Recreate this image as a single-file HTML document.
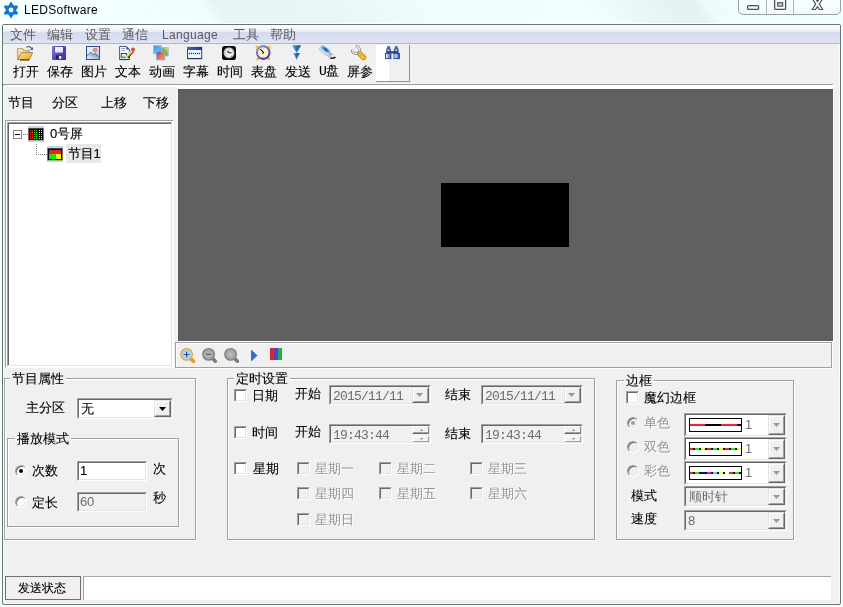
<!DOCTYPE html>
<html lang="zh-CN">
<head>
<meta charset="utf-8">
<title>LEDSoftware</title>
<style>
*{box-sizing:border-box;margin:0;padding:0}
html,body{width:843px;height:607px;overflow:hidden}
body{position:relative;background:#f0fefe;font-family:"Liberation Sans","WenQuanYi Zen Hei","Noto Sans CJK SC",sans-serif;font-size:13px;line-height:13px;color:#000}
.a{position:absolute}
svg{position:absolute;overflow:visible}
.t{position:absolute;white-space:nowrap;height:13px;line-height:13px;-webkit-text-stroke:0.12px #000}
.t.mi,.t.g,.t.d,.t.nb{-webkit-text-stroke:0}
.m{font-family:"Liberation Mono","WenQuanYi Zen Hei",monospace;letter-spacing:-0.8px}
.n{letter-spacing:-0.23px}
body>div.t,body>div.gt{will-change:transform}
.g{color:#6d6d6d}
.d{color:#939393;text-shadow:1px 1px 0 #fff}
#glass{left:0;top:0;width:843px;height:607px;background:#f0fefe}
#cap{left:0;top:0;width:843px;height:24px;background:linear-gradient(52deg,#f8ffff 0,#f4ffff 60px,#f1fefe 168px,#e5f5f4 183px,#e8f7f6 267px,#f0fdfd 354px,#f2ffff 470px,#e9f8f7 510px,#e3f3f1 545px,#e4f4f2 559px,#effcfc 570px,#f1fefe 679px)}
#frame{left:1px;top:23px;width:841px;height:583px;border:1px solid #fbffff;border-radius:3px}
#win{left:2px;top:24px;width:839px;height:581px;border:1px solid #6b7272;border-radius:2px;background:#f0f0f0;box-shadow:inset 1px 1px 0 #fcfcfc,inset -1px -1px 0 #fcfcfc}
#menu{left:3px;top:25px;width:837px;height:19px;background:linear-gradient(#ffffff 0,#fbfbfe 2px,#eef0fa 5px,#e7eaf7 7px,#d5dbee 7px,#d8ddf0 12px,#dfe4f4 18px);border-bottom:1px solid #b0b6d0}
.mi{color:#5a5a5a}
.grp{position:absolute;border:1px solid #a0a0a0;box-shadow:1px 1px 0 #fff,inset 1px 1px 0 #fff}
.gt{position:absolute;background:#f0f0f0;white-space:nowrap;height:13px;line-height:13px;padding:0 2px;-webkit-text-stroke:0.12px #000}
.sunk{position:absolute;border-style:solid;border-width:1px;border-color:#a0a0a0 #fff #fff #a0a0a0;background:#fff}
.sunk:before{content:"";position:absolute;left:0;top:0;right:0;bottom:0;border-style:solid;border-width:1px;border-color:#696969 #e3e3e3 #e3e3e3 #696969}
.sunk.dis{background:#f0f0f0}
.btn{position:absolute;background:#f0f0f0;border-style:solid;border-width:1px;border-color:#e3e3e3 #696969 #696969 #e3e3e3}
.btn:before{content:"";position:absolute;left:0;top:0;right:0;bottom:0;border-style:solid;border-width:1px;border-color:#fff #a0a0a0 #a0a0a0 #fff}
.arr{position:absolute;width:7px;height:4px;background:#000;clip-path:polygon(0 0,100% 0,50% 100%)}
.arr.ga{background:#9a9a9a}
.cb{position:absolute;width:13px;height:13px;border-style:solid;border-width:1px;border-color:#a0a0a0 #fff #fff #a0a0a0;background:#fff}
.cb:before{content:"";position:absolute;left:0;top:0;right:0;bottom:0;border-style:solid;border-width:1px;border-color:#696969 #e3e3e3 #e3e3e3 #696969}
.cb.dis{background:#f0f0f0}
.rb{position:absolute;width:12px;height:12px;border-radius:50%;background:#fff;border:1px solid;border-color:#a0a0a0 #fff #fff #a0a0a0;box-shadow:inset 1px 1px 0 #696969,inset -1px -1px 0 #e3e3e3}
.rb.dis{background:#f0f0f0}
.rb i{position:absolute;left:3px;top:3px;width:4px;height:4px;border-radius:50%;background:#000}
.rb.dis i{background:#a0a0a0}
</style>
</head>
<body>
<div id="glass" class="a"></div>
<div id="cap" class="a"></div>
<div id="frame" class="a"></div>
<div id="win" class="a"></div>

<!-- title bar -->
<svg style="left:4px;top:2px" width="14" height="16" viewBox="0 0 14 16"><path d="M7 1.2 L12.9 11.4 L1.1 11.4 Z M1.1 4.6 L12.9 4.6 L7 14.8 Z" fill="#0b76da" stroke="#0b76da" stroke-width="2.1" stroke-linejoin="round"/><circle cx="7" cy="8" r="2.4" fill="#fff"/></svg>
<div class="t nb" style="left:24px;top:3px;font-size:12px;height:14px;line-height:14px;letter-spacing:0.3px">LEDSoftware</div>
<div class="a" style="left:738px;top:-1px;width:103px;height:16px;border:1px solid #9aa3a3;border-radius:0 0 5px 5px;background:linear-gradient(#f8fefe,#f0f9f9)"></div>
<div class="a" style="left:766px;top:0;width:1px;height:14px;background:#b0b8b8"></div>
<div class="a" style="left:793px;top:0;width:1px;height:14px;background:#b0b8b8"></div>
<svg style="left:738px;top:0" width="103" height="15" viewBox="0 0 103 15">
<rect x="9.6" y="5.6" width="11" height="3.8" rx="1" fill="#f6f6f6" stroke="#4e5066" stroke-width="1.3"/>
<rect x="36.6" y="-1.4" width="11" height="10.8" rx="1" fill="#fbfbfb" stroke="#4e5066" stroke-width="1.3"/>
<rect x="39.8" y="2.7" width="4.8" height="3.4" fill="#d8d8d8" stroke="#4e5066" stroke-width="1.2"/>
<path d="M74.2 -1.5 L77.6 -1.5 L79.5 1.6 L81.4 -1.5 L84.8 -1.5 L81.3 4.2 L84.8 9.5 L81.4 9.5 L79.5 6.6 L77.6 9.5 L74.2 9.5 L77.7 4.2 Z" fill="#fcfcfc" stroke="#4e5066" stroke-width="1.2" stroke-linejoin="round"/>
</svg>

<!-- menu -->
<div id="menu" class="a"></div>
<div class="t mi" style="left:10px;top:28px">文件</div>
<div class="t mi" style="left:47px;top:28px">编辑</div>
<div class="t mi" style="left:85px;top:28px">设置</div>
<div class="t mi" style="left:122px;top:28px">通信</div>
<div class="t mi" style="left:233px;top:28px">工具</div>
<div class="t mi" style="left:270px;top:28px">帮助</div>
<div class="t mi" style="left:162px;top:28px;font-size:12px;letter-spacing:0.33px;height:14px;line-height:14px">Language</div>
<!-- toolbar -->
<div class="t" style="left:13px;top:65px">打开</div>
<div class="t" style="left:47px;top:65px">保存</div>
<div class="t" style="left:81px;top:65px">图片</div>
<div class="t" style="left:115px;top:65px">文本</div>
<div class="t" style="left:149px;top:65px">动画</div>
<div class="t" style="left:183px;top:65px">字幕</div>
<div class="t" style="left:217px;top:65px">时间</div>
<div class="t" style="left:251px;top:65px">表盘</div>
<div class="t" style="left:285px;top:65px">发送</div>
<div class="t" style="left:347px;top:65px">屏参</div>
<div class="t m" style="left:319px;top:65px">U盘</div>
<div class="a" style="left:376px;top:45px;width:34px;height:37px;background:linear-gradient(90deg,#fff 0,#fff 13px,#f0f0f0 13px);border-right:1px solid #909090;border-bottom:1px solid #909090"></div>
<div class="a" style="left:3px;top:84px;width:830px;height:1px;background:#a0a0a0"></div>
<div class="a" style="left:4px;top:85px;width:830px;height:2px;background:#fff"></div>
<div class="a" style="left:177px;top:87px;width:657px;height:1px;background:#fff"></div>
<div class="a" style="left:3px;top:85px;width:1px;height:1px;background:#a0a0a0"></div>
<!-- left pane -->
<div class="t" style="left:8px;top:96px">节目</div>
<div class="t" style="left:52px;top:96px">分区</div>
<div class="t" style="left:101px;top:96px">上移</div>
<div class="t" style="left:143px;top:96px">下移</div>
<div class="a" style="left:5px;top:120px;width:169px;height:248px;border-style:solid;border-width:1px;border-color:#a0a0a0 #fff #fff #a0a0a0"></div>
<div class="a" style="left:6px;top:121px;width:167px;height:246px;border-style:solid;border-width:1px;border-color:#fff #fff #fff #fff"></div>
<div class="a" style="left:7px;top:122px;width:165px;height:244px;border-style:solid;border-width:1px;border-color:#a0a0a0 #e3e3e3 #e3e3e3 #a0a0a0;background:#fff"></div>
<div class="a" style="left:8px;top:123px;width:163px;height:242px;border-style:solid;border-width:1px 0 0 1px;border-color:#696969"></div>
<div class="a" style="left:13px;top:130px;width:9px;height:9px;border:1px solid #848484;background:#fff"></div>
<div class="a" style="left:15px;top:134px;width:5px;height:1px;background:#000"></div>
<div class="a" style="left:23px;top:134px;width:5px;height:1px;background:repeating-linear-gradient(90deg,#808080 0,#808080 1px,transparent 1px,transparent 2px)"></div>
<div class="a" style="left:36px;top:144px;width:1px;height:11px;background:repeating-linear-gradient(180deg,#808080 0,#808080 1px,transparent 1px,transparent 2px)"></div>
<div class="a" style="left:36px;top:154px;width:11px;height:1px;background:repeating-linear-gradient(90deg,#808080 0,#808080 1px,transparent 1px,transparent 2px)"></div>
<div class="t n" style="left:50px;top:127px">0号屏</div>
<div class="a" style="left:66px;top:144px;width:35px;height:19px;background:#e8e8e8"></div>
<div class="t n" style="left:68px;top:147px">节目1</div>

<!-- canvas -->
<div class="a" style="left:177px;top:88px;width:657px;height:254px;border:1px solid #fff;background:#606060;box-shadow:inset 1px 1px 0 #565656"></div>
<div class="a" style="left:441px;top:183px;width:128px;height:64px;background:#000"></div>
<div class="grp" style="left:175px;top:342px;width:657px;height:26px"></div>
<div class="a" style="left:270px;top:348px;width:4px;height:12px;background:#e8202c"></div>
<div class="a" style="left:274px;top:348px;width:4px;height:12px;background:#3c4cc8"></div>
<div class="a" style="left:278px;top:348px;width:4px;height:12px;background:#28a850"></div>
<svg style="left:250px;top:349px" width="9" height="13" viewBox="0 0 9 13"><path d="M1 0.5 L7.5 6.5 L1 12.5 Z" fill="#2f6fe0"/></svg>

<!-- group 1 -->
<div class="grp" style="left:4px;top:378px;width:192px;height:162px"></div>
<div class="gt" style="left:10px;top:372px">节目属性</div>
<div class="t" style="left:26px;top:401px">主分区</div>
<div class="sunk" style="left:77px;top:398px;width:96px;height:21px"></div>
<div class="t" style="left:81px;top:402px">无</div>
<div class="btn" style="left:154px;top:400px;width:17px;height:17px"></div>
<div class="arr" style="left:159px;top:407px"></div>
<div class="grp" style="left:7px;top:438px;width:172px;height:89px"></div>
<div class="gt" style="left:15px;top:432px">播放模式</div>
<div class="rb" style="left:15px;top:465px"><i></i></div>
<div class="t" style="left:32px;top:464px">次数</div>
<div class="sunk" style="left:77px;top:461px;width:70px;height:20px"></div>
<div class="t n" style="left:80px;top:464px">1</div>
<div class="t" style="left:153px;top:462px">次</div>
<div class="rb" style="left:15px;top:496px"></div>
<div class="t" style="left:32px;top:496px">定长</div>
<div class="sunk dis" style="left:77px;top:492px;width:70px;height:20px"></div>
<div class="t n g" style="left:80px;top:495px">60</div>
<div class="t" style="left:153px;top:491px">秒</div>

<!-- group 2 -->
<div class="grp" style="left:227px;top:378px;width:368px;height:162px"></div>
<div class="gt" style="left:234px;top:372px">定时设置</div>
<div class="cb" style="left:234px;top:389px"></div>
<div class="t" style="left:252px;top:389px">日期</div>
<div class="t" style="left:295px;top:387px">开始</div>
<div class="sunk dis" style="left:329px;top:385px;width:102px;height:20px"></div>
<div class="t m g" style="left:333px;top:390px">2015/11/11</div>
<div class="btn" style="left:412px;top:387px;width:17px;height:16px"></div>
<div class="arr ga" style="left:416px;top:393px"></div>
<div class="t" style="left:445px;top:388px">结束</div>
<div class="sunk dis" style="left:481px;top:385px;width:102px;height:20px"></div>
<div class="t m g" style="left:485px;top:390px">2015/11/11</div>
<div class="btn" style="left:564px;top:387px;width:17px;height:16px"></div>
<div class="arr ga" style="left:568px;top:393px"></div>
<div class="cb" style="left:234px;top:426px"></div>
<div class="t" style="left:252px;top:426px">时间</div>
<div class="t" style="left:295px;top:425px">开始</div>
<div class="sunk dis" style="left:329px;top:424px;width:102px;height:20px"></div>
<div class="t m g" style="left:333px;top:429px">19:43:44</div>
<div class="a" style="left:412px;top:426px;width:17px;height:8px;border-style:solid;border-width:1px;border-color:#fff #8a8a8a #696969 #fff;box-shadow:inset 0 -1px 0 #a0a0a0"></div>
<div class="a" style="left:413px;top:436px;width:16px;height:6px;border-style:solid;border-width:1px;border-color:#fff #a0a0a0 #a0a0a0 #fff"></div>
<div class="a" style="left:421px;top:429px;width:1px;height:1px;background:#a0a0a0"></div><div class="a" style="left:420px;top:430px;width:3px;height:1px;background:#a0a0a0"></div>
<div class="a" style="left:420px;top:438px;width:3px;height:1px;background:#a0a0a0"></div><div class="a" style="left:421px;top:439px;width:1px;height:1px;background:#a0a0a0"></div>
<div class="t" style="left:445px;top:427px">结束</div>
<div class="sunk dis" style="left:481px;top:424px;width:102px;height:20px"></div>
<div class="t m g" style="left:485px;top:429px">19:43:44</div>
<div class="a" style="left:564px;top:426px;width:17px;height:8px;border-style:solid;border-width:1px;border-color:#fff #8a8a8a #696969 #fff;box-shadow:inset 0 -1px 0 #a0a0a0"></div>
<div class="a" style="left:565px;top:436px;width:16px;height:6px;border-style:solid;border-width:1px;border-color:#fff #a0a0a0 #a0a0a0 #fff"></div>
<div class="a" style="left:573px;top:429px;width:1px;height:1px;background:#a0a0a0"></div><div class="a" style="left:572px;top:430px;width:3px;height:1px;background:#a0a0a0"></div>
<div class="a" style="left:572px;top:438px;width:3px;height:1px;background:#a0a0a0"></div><div class="a" style="left:573px;top:439px;width:1px;height:1px;background:#a0a0a0"></div>
<div class="cb" style="left:234px;top:462px"></div>
<div class="t" style="left:253px;top:462px">星期</div>
<div class="cb dis" style="left:297px;top:462px"></div><div class="t d" style="left:315px;top:462px">星期一</div>
<div class="cb dis" style="left:379px;top:462px"></div><div class="t d" style="left:397px;top:462px">星期二</div>
<div class="cb dis" style="left:470px;top:462px"></div><div class="t d" style="left:488px;top:462px">星期三</div>
<div class="cb dis" style="left:297px;top:487px"></div><div class="t d" style="left:315px;top:487px">星期四</div>
<div class="cb dis" style="left:379px;top:487px"></div><div class="t d" style="left:397px;top:487px">星期五</div>
<div class="cb dis" style="left:470px;top:487px"></div><div class="t d" style="left:488px;top:487px">星期六</div>
<div class="cb dis" style="left:297px;top:513px"></div><div class="t d" style="left:315px;top:513px">星期日</div>
<!-- group 3 -->
<div class="grp" style="left:616px;top:380px;width:178px;height:160px"></div>
<div class="gt" style="left:624px;top:374px">边框</div>
<div class="cb" style="left:626px;top:391px"></div>
<div class="t" style="left:644px;top:391px">魔幻边框</div>
<div class="rb dis" style="left:627px;top:417px"><i></i></div>
<div class="t d" style="left:644px;top:416px">单色</div>
<div class="sunk" style="left:684px;top:413px;width:103px;height:24px"></div>
<div class="a" style="left:689px;top:418px;width:53px;height:14px;border:1px solid #000;background:#fff"></div>
<div class="a" style="left:690px;top:424px;width:51px;height:2px;background:linear-gradient(90deg,#ff2020 0px,#ff2020 15px,#000 15px,#000 31px,#ff2020 31px,#ff2020 47px,#000 47px,#000 51px)"></div>
<div class="t n g" style="left:745px;top:418px">1</div>
<div class="btn" style="left:768px;top:415px;width:17px;height:20px"></div>
<div class="arr ga" style="left:773px;top:423px"></div>
<div class="rb dis" style="left:627px;top:441px"></div>
<div class="t d" style="left:644px;top:440px">双色</div>
<div class="sunk" style="left:684px;top:437px;width:103px;height:24px"></div>
<div class="a" style="left:689px;top:442px;width:53px;height:14px;border:1px solid #000;background:#fff"></div>
<div class="a" style="left:690px;top:448px;width:51px;height:2px;background:linear-gradient(90deg,#ff2020 0px,#ff2020 3px,#000 3px,#000 5px,#00ff00 5px,#00ff00 9px,#000 9px,#000 11px,#ffff00 11px,#ffff00 15px,#000 15px,#000 17px,#ff2020 17px,#ff2020 21px,#000 21px,#000 23px,#00ff00 23px,#00ff00 27px,#000 27px,#000 29px,#ffff00 29px,#ffff00 33px,#000 33px,#000 35px,#ff2020 35px,#ff2020 39px,#000 39px,#000 41px,#00ff00 41px,#00ff00 45px,#000 45px,#000 47px,#ffff00 47px,#ffff00 51px)"></div>
<div class="t n g" style="left:745px;top:442px">1</div>
<div class="btn" style="left:768px;top:439px;width:17px;height:20px"></div>
<div class="arr ga" style="left:773px;top:447px"></div>
<div class="rb dis" style="left:627px;top:465px"></div>
<div class="t d" style="left:644px;top:464px">彩色</div>
<div class="sunk" style="left:684px;top:461px;width:103px;height:24px"></div>
<div class="a" style="left:689px;top:466px;width:53px;height:14px;border:1px solid #000;background:#fff"></div>
<div class="a" style="left:690px;top:472px;width:51px;height:2px;background:linear-gradient(90deg,#ff2020 0px,#ff2020 3px,#000 3px,#000 5px,#00ff00 5px,#00ff00 9px,#000 9px,#000 11px,#0000ff 11px,#0000ff 15px,#000 15px,#000 17px,#ff00ff 17px,#ff00ff 21px,#000 21px,#000 23px,#00ffff 23px,#00ffff 27px,#000 27px,#000 29px,#ffff00 29px,#ffff00 33px,#000 33px,#000 35px,#fff 35px,#fff 39px,#ff2020 39px,#ff2020 43px,#000 43px,#000 45px,#00ff00 45px,#00ff00 49px,#000 49px,#000 51px)"></div>
<div class="t n g" style="left:745px;top:466px">1</div>
<div class="btn" style="left:768px;top:463px;width:17px;height:20px"></div>
<div class="arr ga" style="left:773px;top:471px"></div>
<div class="t" style="left:631px;top:489px">模式</div>
<div class="sunk dis" style="left:684px;top:486px;width:103px;height:21px"></div>
<div class="t g" style="left:689px;top:490px">顺时针</div>
<div class="btn" style="left:768px;top:488px;width:17px;height:17px"></div>
<div class="arr ga" style="left:773px;top:495px"></div>
<div class="t" style="left:631px;top:512px">速度</div>
<div class="sunk dis" style="left:684px;top:510px;width:103px;height:21px"></div>
<div class="t n g" style="left:688px;top:514px">8</div>
<div class="btn" style="left:768px;top:512px;width:17px;height:17px"></div>
<div class="arr ga" style="left:773px;top:519px"></div>

<!-- status bar -->
<div class="a" style="left:5px;top:576px;width:76px;height:24px;border:1px solid #707070"></div>
<div class="t" style="left:18px;top:582px;font-size:12px">发送状态</div>
<div class="a" style="left:83px;top:576px;width:748px;height:24px;background:#fff;border-left:1px solid #a0a0a0;border-top:1px solid #a8a8a8"></div>

<!-- toolbar icons -->
<svg width="0" height="0" style="left:0;top:0"><defs>
<linearGradient id="gFold" x1="0" y1="0" x2="1" y2="1"><stop offset="0" stop-color="#ffe68a"/><stop offset="1" stop-color="#f0a020"/></linearGradient>
<linearGradient id="gFoldB" x1="0" y1="0" x2="1" y2="1"><stop offset="0" stop-color="#fdf0a0"/><stop offset="1" stop-color="#f4c850"/></linearGradient>
<linearGradient id="gSave" x1="0" y1="0" x2="1" y2="1"><stop offset="0" stop-color="#8080e8"/><stop offset="0.5" stop-color="#5050c8"/><stop offset="1" stop-color="#3030a0"/></linearGradient>
<linearGradient id="gLab" x1="0" y1="0" x2="1" y2="1"><stop offset="0" stop-color="#ffffff"/><stop offset="1" stop-color="#d4dcf4"/></linearGradient>
<linearGradient id="gSky" x1="0" y1="0" x2="1" y2="1"><stop offset="0" stop-color="#ffffff"/><stop offset="1" stop-color="#a0c0f8"/></linearGradient>
<linearGradient id="gMtn" x1="0" y1="1" x2="1" y2="0"><stop offset="0" stop-color="#f0f4ff"/><stop offset="1" stop-color="#6878b0"/></linearGradient>
<radialGradient id="gSun"><stop offset="0" stop-color="#ffe070"/><stop offset="0.5" stop-color="#f89020"/><stop offset="1" stop-color="#e85808"/></radialGradient>
<linearGradient id="gBlu" x1="0" y1="0" x2="1" y2="1"><stop offset="0" stop-color="#1888f0"/><stop offset="0.5" stop-color="#60b8ff"/><stop offset="1" stop-color="#1080f0"/></linearGradient>
<linearGradient id="gGrn" x1="1" y1="0" x2="0" y2="1"><stop offset="0" stop-color="#e0f0a0"/><stop offset="0.5" stop-color="#78b010"/><stop offset="1" stop-color="#a8d040"/></linearGradient>
<linearGradient id="gRed" x1="0" y1="0" x2="1" y2="1"><stop offset="0" stop-color="#f80808"/><stop offset="0.5" stop-color="#f07050"/><stop offset="1" stop-color="#f8a030"/></linearGradient>
<linearGradient id="gTitle" x1="0" y1="0" x2="1" y2="0"><stop offset="0" stop-color="#3a6ae0"/><stop offset="1" stop-color="#1038b0"/></linearGradient>
<linearGradient id="gSend" x1="0" y1="0" x2="1" y2="0"><stop offset="0" stop-color="#58b0f0"/><stop offset="0.5" stop-color="#2070c8"/><stop offset="1" stop-color="#104898"/></linearGradient>
<linearGradient id="gGold" x1="0" y1="0" x2="1" y2="1"><stop offset="0" stop-color="#f8d050"/><stop offset="1" stop-color="#e09810"/></linearGradient>
<linearGradient id="gSilv" x1="0" y1="0" x2="1" y2="1"><stop offset="0" stop-color="#f4f4f4"/><stop offset="1" stop-color="#808080"/></linearGradient>
<linearGradient id="gBin" x1="0" y1="0" x2="1" y2="0"><stop offset="0" stop-color="#ffffff"/><stop offset="1" stop-color="#3058b0"/></linearGradient>
<radialGradient id="gLens"><stop offset="0" stop-color="#ffffff"/><stop offset="1" stop-color="#58b0f8"/></radialGradient>
<radialGradient id="gLensG"><stop offset="0" stop-color="#c0c0c0"/><stop offset="1" stop-color="#989898"/></radialGradient>
<radialGradient id="gFace"><stop offset="0" stop-color="#ffffff"/><stop offset="0.7" stop-color="#ececec"/><stop offset="1" stop-color="#c4c4c4"/></radialGradient>
<linearGradient id="gRing" x1="0" y1="0" x2="0.6" y2="1"><stop offset="0" stop-color="#9c9cf0"/><stop offset="0.5" stop-color="#6c6ce0"/><stop offset="1" stop-color="#3434b8"/></linearGradient>
</defs></svg>
<!-- open -->
<svg style="left:17px;top:45px" width="16" height="16" viewBox="0 0 16 16">
<path d="M0.6 3.6 L5.8 3.6 L6.8 5.6 L12.4 5.6 L12.4 8 L4.8 8 L0.6 14.6 Z" fill="url(#gFoldB)" stroke="#a89468" stroke-width="0.9"/>
<path d="M4.6 7.6 L15.6 7.6 L12.4 14.6 L0.8 14.6 Z" fill="url(#gFold)" stroke="#9c8454" stroke-width="0.9"/>
<path d="M3 15 L12.4 15" stroke="#1a1408" stroke-width="0.9"/>
<path d="M9.4 2.4 Q12.4 0.2 14.6 3.4" fill="none" stroke="#3c5c9c" stroke-width="1.2"/>
<path d="M13 4.8 L15.9 2 L15.9 5 Z" fill="#2c4c94"/>
</svg>
<!-- save -->
<svg style="left:51px;top:45px" width="16" height="16" viewBox="0 0 16 16">
<path d="M1 1 L15 1 L15 15 L2 15 L1 14 Z" fill="url(#gSave)"/>
<rect x="3.3" y="1.4" width="9.4" height="6.6" fill="#4040b0"/>
<rect x="4" y="2" width="8" height="5.6" fill="url(#gLab)"/>
<rect x="5.2" y="10.4" width="5.6" height="3.8" fill="#1c1c28"/>
<rect x="7.8" y="10.9" width="2.6" height="3" fill="#e4e6f6"/>
<rect x="13.2" y="3" width="1" height="1.2" fill="#282878"/>
</svg>
<!-- picture -->
<svg style="left:85px;top:45px" width="16" height="16" viewBox="0 0 16 16">
<rect x="1.5" y="1.5" width="13" height="13" fill="url(#gSky)" stroke="#2450a4" stroke-width="1"/>
<path d="M2 10.8 L5.8 7 L8.4 9.6 L10 8.2 L14 12 L14 14 L2 14 Z" fill="url(#gMtn)"/>
<path d="M2 10.8 L5.8 7 L8.4 9.6 L10 8.2 L14 12" fill="none" stroke="#283868" stroke-width="0.9" stroke-dasharray="1 0.6"/>
<circle cx="10" cy="5" r="2.1" fill="url(#gSun)"/>
</svg>
<!-- text -->
<svg style="left:119px;top:45px" width="16" height="16" viewBox="0 0 16 16">
<path d="M0.6 1.5 L7.6 1.5 L10.4 4.4 L10.4 14.5 L0.6 14.5 Z" fill="#fff" stroke="#3a5a8c" stroke-width="1"/>
<path d="M0.6 14.5 L10.4 14.5" stroke="#1c3c64" stroke-width="1.2"/>
<path d="M7.4 1.6 L10.4 4.6 L7.4 4.6 Z" fill="#2c4c80"/>
<path d="M2.2 3.5 L6 3.5 M2.2 5.6 L6 5.6" stroke="#8c98c4" stroke-width="0.9"/>
<rect x="2.2" y="8.4" width="5.4" height="3.8" fill="#e8f4e8" stroke="#303030" stroke-width="0.9"/>
<path d="M7.4 11.6 L13 5.4 L14.8 7 L9.2 13.2 Z" fill="#000"/>
<path d="M6.8 10.8 L12.6 4.6 L14.4 6.4 L8.6 12.6 Z" fill="#ecd468"/>
<path d="M6.8 10.8 L8.6 12.6 L6.6 13 Z" fill="#fff"/>
<circle cx="14" cy="4.4" r="2" fill="#d8503c"/>
</svg>
<!-- animation -->
<svg style="left:153px;top:45px" width="16" height="16" viewBox="0 0 16 16">
<rect x="0.6" y="0.6" width="8" height="8.2" fill="url(#gBlu)" stroke="#9cc0ec" stroke-width="1"/>
<rect x="8.6" y="2.6" width="6.6" height="8.4" fill="url(#gGrn)" stroke="#9cbcec" stroke-width="1"/>
<rect x="3.6" y="6.8" width="8" height="8" fill="url(#gRed)" stroke="#78b0e8" stroke-width="1"/>
</svg>
<!-- subtitle -->
<svg style="left:187px;top:45px" width="16" height="16" viewBox="0 0 16 16">
<rect x="0.5" y="2.4" width="14.2" height="11.2" fill="#f0f4ff" stroke="#2c4878" stroke-width="1"/>
<rect x="0.2" y="2" width="14.8" height="3" fill="url(#gTitle)"/>
<path d="M0.5 13.6 L14.7 13.6" stroke="#1c3050" stroke-width="1"/>
<g fill="#1c2c48"><circle cx="2.5" cy="8.5" r="0.65"/><circle cx="4.5" cy="8.5" r="0.65"/><circle cx="6.5" cy="8.5" r="0.65"/><circle cx="8.5" cy="8.5" r="0.65"/><circle cx="10.5" cy="8.5" r="0.65"/><circle cx="12.5" cy="8.5" r="0.65"/></g>
</svg>
<!-- time -->
<svg style="left:221px;top:45px" width="16" height="16" viewBox="0 0 16 16">
<rect x="1" y="0.9" width="14" height="14.2" rx="2.8" fill="#0a0a0a"/>
<circle cx="8" cy="7.7" r="5.7" fill="#3c3c3c"/>
<circle cx="8" cy="7.7" r="5.3" fill="url(#gFace)"/>
<path d="M8 7.7 L8 3" stroke="#d09c9c" stroke-width="0.8"/>
<path d="M6.2 6.4 L8 7.7 L10.6 7.7" fill="none" stroke="#181818" stroke-width="1.1"/>
<g fill="#707070"><circle cx="4.8" cy="5.6" r="0.5"/><circle cx="11.2" cy="5.6" r="0.5"/><circle cx="3.8" cy="7.8" r="0.5"/><circle cx="12.2" cy="7.8" r="0.5"/><circle cx="10.4" cy="11.2" r="0.5"/><circle cx="5" cy="10" r="0.4"/></g>
</svg>
<!-- dial -->
<svg style="left:255px;top:45px" width="16" height="16" viewBox="0 0 16 16">
<circle cx="2.6" cy="2.8" r="2.2" fill="#f8c038"/><circle cx="13.8" cy="2.8" r="2.2" fill="#f8c038"/>
<circle cx="2.8" cy="13.8" r="1.4" fill="#f8a818"/><circle cx="13.6" cy="13.8" r="1.4" fill="#f8a818"/>
<rect x="5.8" y="0" width="4.8" height="1.8" rx="0.8" fill="#a4a4ea"/>
<circle cx="8.2" cy="7.6" r="7.3" fill="url(#gRing)"/>
<circle cx="8.2" cy="7.5" r="5.3" fill="#fcf6cc"/>
<path d="M5.2 4.2 L8.6 7.4 L7.4 8.6" fill="none" stroke="#101010" stroke-width="1.1"/>
<g fill="#b0a880"><circle cx="8.2" cy="3.2" r="0.4"/><circle cx="4" cy="7.6" r="0.4"/><circle cx="12.4" cy="7.6" r="0.4"/><circle cx="8.2" cy="11.8" r="0.4"/></g>
</svg>
<!-- send -->
<svg style="left:289px;top:45px" width="16" height="16" viewBox="0 0 16 16">
<path d="M3 0.3 L12.2 0.3 L7.6 7.8 Z" fill="url(#gSend)"/>
<path d="M4.2 8.1 L10.8 8.1 L7.6 14.4 Z" fill="url(#gSend)"/>
</svg>
<!-- usb -->
<svg style="left:320px;top:45px" width="16" height="16" viewBox="0 0 16 16">
<g transform="rotate(38 7 7)">
<rect x="-1.2" y="4" width="11" height="6.4" rx="2.6" fill="#d8d8e4" stroke="#b0b0c0" stroke-width="0.6"/>
<ellipse cx="4.4" cy="6" rx="5" ry="1.9" fill="#48a8f0"/>
<ellipse cx="4.6" cy="5.8" rx="2.2" ry="0.8" fill="#184880"/>
<rect x="9.6" y="4.8" width="3.4" height="4.8" fill="#e4e4e8" stroke="#a0a0a8" stroke-width="0.5"/>
<rect x="10.8" y="6" width="1" height="1" fill="#202020"/><rect x="10.8" y="8" width="1" height="1" fill="#505050"/>
</g>
<path d="M10.4 13.6 Q12 12.6 13 13 T15.4 12" fill="none" stroke="#000" stroke-width="1.4"/>
</svg>
<!-- screen params -->
<svg style="left:351px;top:45px" width="16" height="16" viewBox="0 0 16 16">
<path d="M4.6 1.3 A3.7 3.7 0 1 1 1.3 4.6" fill="none" stroke="#8a8a8a" stroke-width="2.8"/>
<path d="M4.7 1.6 A3.5 3.5 0 1 1 1.6 4.7" fill="none" stroke="#ececec" stroke-width="1.5"/>
<path d="M6.6 7.6 L8 8.6" stroke="#9a9a9a" stroke-width="2.4"/>
<path d="M8.8 8.8 L12.5 12.5" stroke="#b88410" stroke-width="5.4" stroke-linecap="round"/>
<path d="M8.8 8.8 L12.5 12.5" stroke="#eeb428" stroke-width="4.2" stroke-linecap="round"/>
<path d="M10.6 11.6 L12.2 13.2" stroke="#fbe08a" stroke-width="1" stroke-linecap="round"/>
</svg>
<!-- binoculars -->
<svg style="left:385px;top:46px" width="15" height="13" viewBox="0 0 15 13">
<rect x="2.2" y="0.2" width="2.8" height="3" fill="#3860b0"/><rect x="9.8" y="0.2" width="2.8" height="3" fill="#3860b0"/>
<rect x="1.2" y="2.6" width="4.6" height="5" fill="#284ca0"/><rect x="9" y="2.6" width="4.6" height="5" fill="#284ca0"/>
<rect x="2.4" y="3.4" width="2" height="1.4" fill="#e8f0ff"/><rect x="10.2" y="3.4" width="2" height="1.4" fill="#e8f0ff"/>
<rect x="5.6" y="5.2" width="3.6" height="2.2" fill="#203c88"/>
<rect x="0.5" y="7.4" width="5.4" height="5.2" fill="url(#gBin)" stroke="#20409c" stroke-width="0.9"/>
<rect x="9" y="7.4" width="5.4" height="5.2" fill="url(#gBin)" stroke="#20409c" stroke-width="0.9"/>
</svg>
<!-- zoom icons -->
<svg style="left:180px;top:347px" width="16" height="16" viewBox="0 0 16 16">
<path d="M11.4 12.2 L13.4 14.2" stroke="#f09818" stroke-width="3.6" stroke-linecap="round"/>
<circle cx="6.6" cy="7.4" r="5.6" fill="url(#gLens)" stroke="#e8a838" stroke-width="1.7"/>
<circle cx="6.6" cy="7.4" r="4.6" fill="none" stroke="#fdf4dc" stroke-width="0.6"/>
<path d="M3.8 7.5 L9.4 7.5 M6.6 4.7 L6.6 10.3" stroke="#184c88" stroke-width="1.2"/>
</svg>
<svg style="left:202px;top:347px" width="16" height="16" viewBox="0 0 16 16">
<path d="M11.4 12.2 L13.4 14.2" stroke="#7c7c7c" stroke-width="3.6" stroke-linecap="round"/>
<circle cx="6.6" cy="7.4" r="5.6" fill="url(#gLensG)" stroke="#808080" stroke-width="1.7"/>
<circle cx="6.6" cy="7.4" r="4.6" fill="none" stroke="#b8b8b8" stroke-width="0.6"/>
<path d="M4 7.3 L9.2 7.3" stroke="#585858" stroke-width="1.2"/>
</svg>
<svg style="left:224px;top:347px" width="16" height="16" viewBox="0 0 16 16">
<path d="M11.4 12.2 L13.4 14.2" stroke="#7c7c7c" stroke-width="3.6" stroke-linecap="round"/>
<circle cx="6.6" cy="7.4" r="5.6" fill="url(#gLensG)" stroke="#808080" stroke-width="1.7"/>
<circle cx="6.6" cy="7.4" r="4.6" fill="none" stroke="#b8b8b8" stroke-width="0.6"/>
</svg>
<!-- tree icons -->
<svg style="left:28px;top:126px" width="16" height="16" viewBox="0 0 16 16">
<rect x="0" y="0" width="16" height="16" fill="#c4d4ec"/>
<rect x="0" y="2" width="16" height="12.4" fill="#787878"/>
<rect x="1" y="2.6" width="14" height="11.2" fill="#000"/>
<g fill="#f01818"><rect x="2" y="4" width="1" height="1"/><rect x="4" y="4" width="1" height="1"/><rect x="2" y="6" width="1" height="1"/><rect x="4" y="6" width="1" height="1"/><rect x="2" y="8" width="1" height="1"/><rect x="4" y="8" width="1" height="1"/><rect x="2" y="10" width="1" height="1"/><rect x="4" y="10" width="1" height="1"/><rect x="2" y="12" width="1" height="1"/><rect x="4" y="12" width="1" height="1"/></g>
<g fill="#10e010"><rect x="6" y="4" width="1" height="1"/><rect x="8" y="4" width="1" height="1"/><rect x="6" y="6" width="1" height="1"/><rect x="8" y="6" width="1" height="1"/><rect x="6" y="8" width="1" height="1"/><rect x="8" y="8" width="1" height="1"/><rect x="6" y="10" width="1" height="1"/><rect x="8" y="10" width="1" height="1"/><rect x="6" y="12" width="1" height="1"/><rect x="8" y="12" width="1" height="1"/></g>
<g fill="#f8f000"><rect x="11" y="4" width="1" height="1"/><rect x="13" y="4" width="1" height="1"/><rect x="11" y="6" width="1" height="1"/><rect x="13" y="6" width="1" height="1"/><rect x="11" y="8" width="1" height="1"/><rect x="13" y="8" width="1" height="1"/><rect x="11" y="10" width="1" height="1"/><rect x="13" y="10" width="1" height="1"/><rect x="11" y="12" width="1" height="1"/><rect x="13" y="12" width="1" height="1"/></g>
</svg>
<svg style="left:47px;top:146px" width="16" height="16" viewBox="0 0 16 16">
<rect x="0" y="0" width="16" height="16" fill="#c4d4ec"/>
<rect x="0" y="2" width="16" height="12.4" fill="#787878"/>
<rect x="1" y="2.6" width="14" height="11.2" fill="#000"/>
<rect x="2" y="4" width="12" height="4" fill="#f02020"/>
<rect x="2" y="8" width="7" height="5" fill="#00f000"/>
<rect x="9" y="8" width="5" height="5" fill="#f8f800"/>
</svg>

</body>
</html>
